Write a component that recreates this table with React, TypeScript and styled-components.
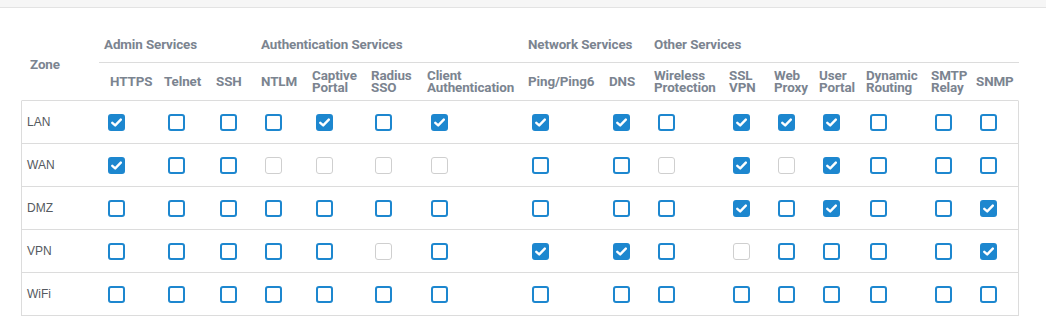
import styled, { createGlobalStyle } from "styled-components";

const GlobalStyle = createGlobalStyle`
    body {
        margin: 0;
        background: #ffffff;
        font-family: Roboto, "Liberation Sans", Arial, sans-serif;
    }
`;

type State = "on" | "off" | "disabled";

const columns = [
    { label: "HTTPS", width: 60, indent: 11 },
    { label: "Telnet", width: 52 },
    { label: "SSH", width: 45 },
    { label: "NTLM", width: 51 },
    { label: "Captive Portal", width: 59 },
    { label: "Radius SSO", width: 56 },
    { label: "Client Authentication", width: 101 },
    { label: "Ping/Ping6", width: 81 },
    { label: "DNS", width: 45 },
    { label: "Wireless Protection", width: 75 },
    { label: "SSL VPN", width: 45 },
    { label: "Web Proxy", width: 45 },
    { label: "User Portal", width: 47 },
    { label: "Dynamic Routing", width: 65 },
    { label: "SMTP Relay", width: 45 },
    { label: "SNMP", width: 48 },
];

const groups = [
    { label: "Admin Services", span: 3 },
    { label: "Authentication Services", span: 4 },
    { label: "Network Services", span: 2 },
    { label: "Other Services", span: 7 },
];

// C = checked, U = unchecked, D = disabled
const zones: { name: string; cells: string }[] = [
    { name: "LAN", cells: "CUUUCUCCCUCCCUUU" },
    { name: "WAN", cells: "CUUDDDDUUDCDCUUU" },
    { name: "DMZ", cells: "UUUUUUUUUUCUCUUC" },
    { name: "VPN", cells: "UUUUUDUCCUDUUUUC" },
    { name: "WiFi", cells: "UUUUUUUUUUUUUUUU" },
];

const toState = (c: string): State =>
    c === "C" ? "on" : c === "D" ? "disabled" : "off";

const template = `77px ${columns.map((c) => `${c.width}px`).join(" ")}`;

const TopBand = styled.div`
    height: 7px;
    background: #f6f6f6;
    border-bottom: 1px solid #e3e3e3;
`;

const Page = styled.div`
    padding: 20px 0 0 21px;
`;

const Table = styled.div`
    width: 998px;
`;

const Head = styled.div`
    display: grid;
    grid-template-columns: ${template};
    grid-template-rows: 35px 37px;
    border-bottom: 1px solid #dcdcdc;
    border-left: 1px solid transparent;
    border-right: 1px solid transparent;
    color: #7b8490;
    font-size: 13.4px;
    font-weight: 700;
    letter-spacing: -0.1px;
`;

const ZoneHead = styled.div`
    grid-row: 1 / span 2;
    display: flex;
    align-items: center;
    padding-left: 8px;
`;

const GroupHead = styled.div<{ $span: number }>`
    grid-column: span ${({ $span }) => $span};
    display: flex;
    align-items: center;
    padding-left: 5px;
    padding-bottom: 1px;
    border-bottom: 1px solid #dcdcdc;
    white-space: nowrap;
`;

const ColHead = styled.div<{ $indent?: number }>`
    display: flex;
    align-items: center;
    padding-left: ${({ $indent }) => $indent ?? 5}px;
    padding-top: 1px;
    line-height: 12px;
    white-space: nowrap;
`;

const Body = styled.div`
    border-left: 1px solid #dcdcdc;
    border-right: 1px solid #dcdcdc;
`;

const Row = styled.div`
    display: grid;
    grid-template-columns: ${template};
    height: 43px;
    border-bottom: 1px solid #dcdcdc;
    box-sizing: border-box;
`;

const ZoneName = styled.div`
    display: flex;
    align-items: center;
    padding-left: 5px;
    font-family: "Liberation Sans", Arial, sans-serif;
    font-size: 12px;
    color: #555a60;
`;

const Cell = styled.div`
    display: flex;
    align-items: center;
    padding-left: 9px;
`;

const Box = styled.span<{ $state: State }>`
    width: 17px;
    height: 17px;
    box-sizing: border-box;
    border-radius: 3px;
    display: flex;
    align-items: center;
    justify-content: center;
    border: ${({ $state }) =>
        $state === "disabled" ? "1.5px solid #cfcfcf" : "2px solid #1d87cf"};
    background: ${({ $state }) => ($state === "on" ? "#1d87cf" : "#ffffff")};
    svg {
        display: block;
    }
`;

const Checkbox = ({ state }: { state: State }) => (
    <Box $state={state}>
        {state === "on" && (
            <svg width="11" height="9" viewBox="0 0 11 9">
                <path
                    d="M1.3 4.8 L4.2 7.4 L9.8 1.6"
                    fill="none"
                    stroke="#ffffff"
                    strokeWidth="2.4"
                    strokeLinecap="round"
                    strokeLinejoin="round"
                />
            </svg>
        )}
    </Box>
);

export default function App() {
    return (
        <>
            <GlobalStyle />
            <TopBand />
            <Page>
                <Table>
                    <Head>
                        <ZoneHead>Zone</ZoneHead>
                        {groups.map((g) => (
                            <GroupHead key={g.label} $span={g.span}>
                                {g.label}
                            </GroupHead>
                        ))}
                        {columns.map((c) => (
                            <ColHead key={c.label} $indent={c.indent}>
                                <span>
                                    {c.label.split(" ").map((w, i) => (
                                        <div key={i}>{w}</div>
                                    ))}
                                </span>
                            </ColHead>
                        ))}
                    </Head>
                    <Body>
                        {zones.map((z) => (
                            <Row key={z.name}>
                                <ZoneName>{z.name}</ZoneName>
                                {z.cells.split("").map((c, i) => (
                                    <Cell key={i}>
                                        <Checkbox state={toState(c)} />
                                    </Cell>
                                ))}
                            </Row>
                        ))}
                    </Body>
                </Table>
            </Page>
        </>
    );
}
